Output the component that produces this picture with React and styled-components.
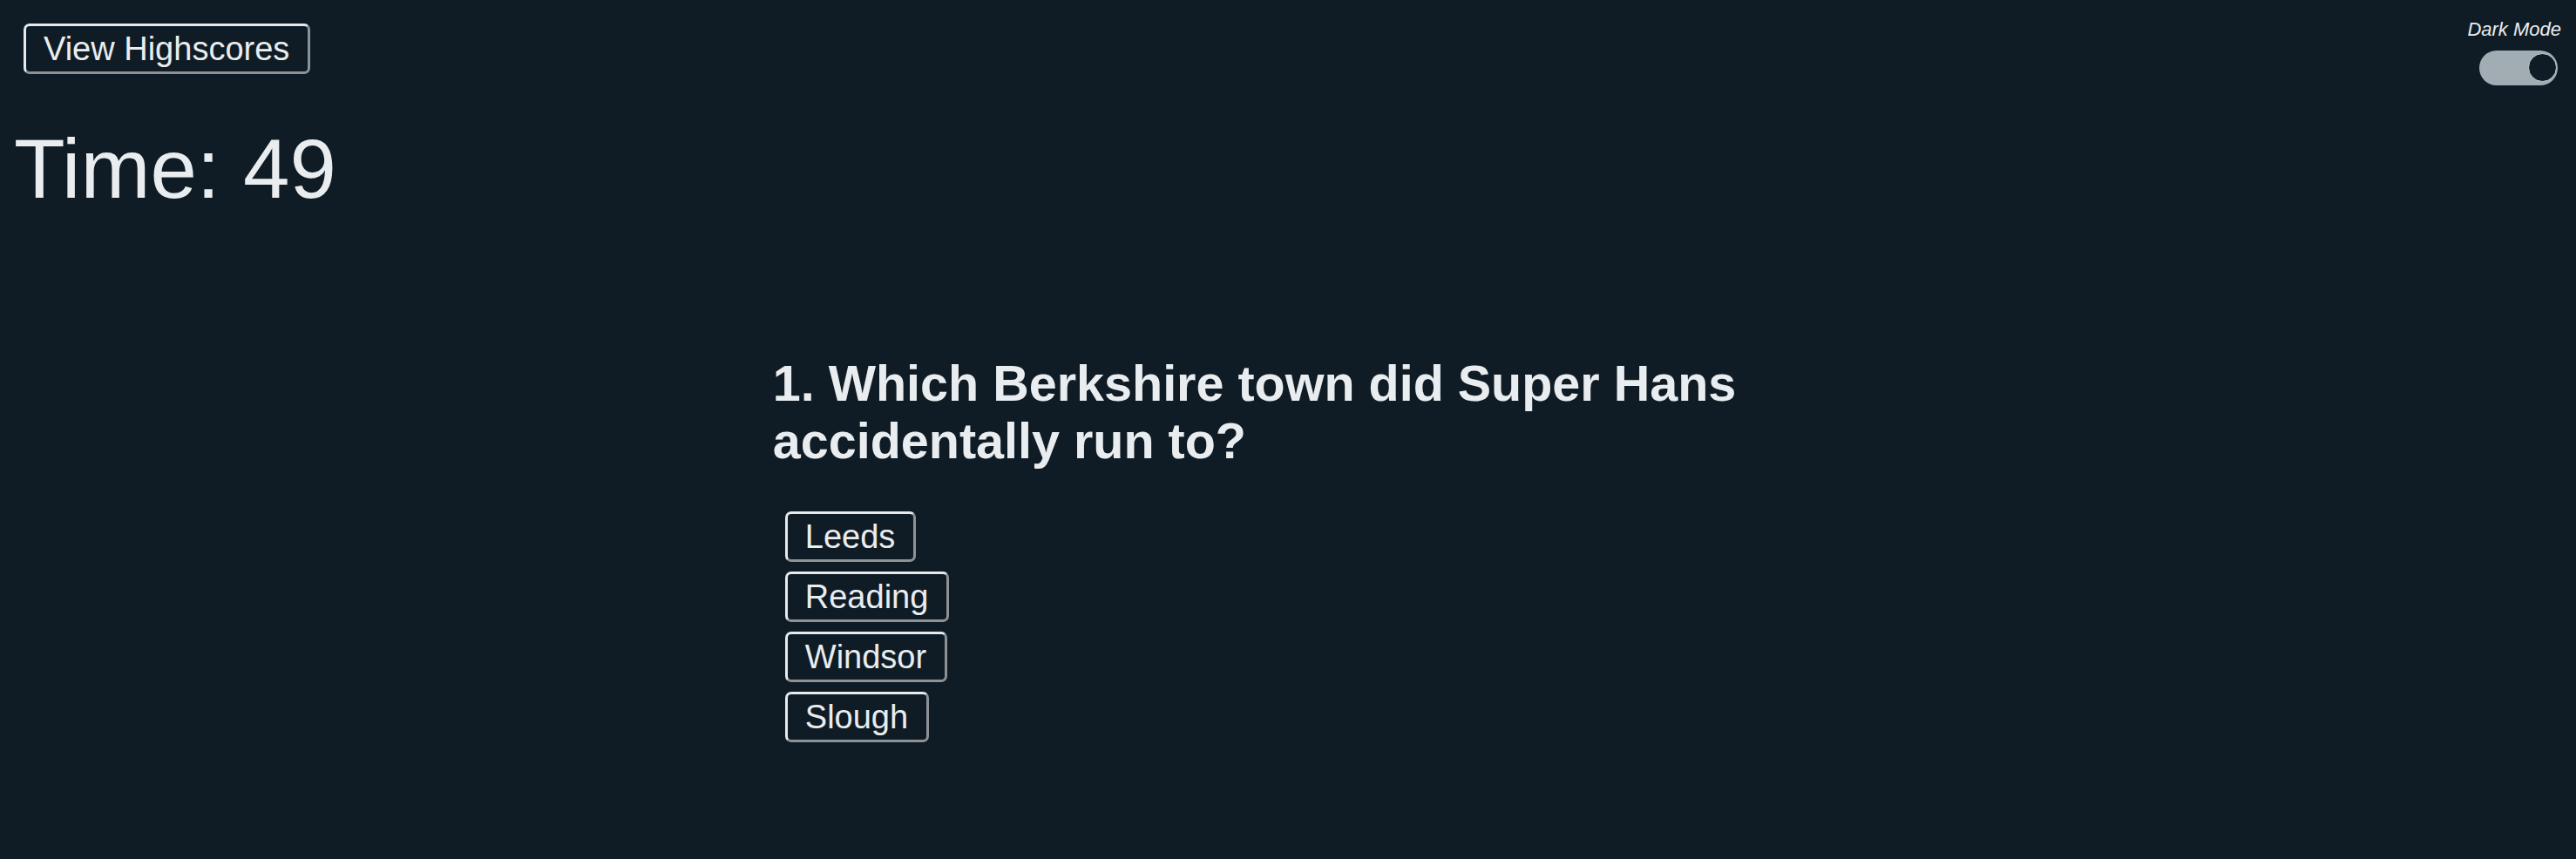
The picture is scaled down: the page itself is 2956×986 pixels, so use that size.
import React, { useState } from "react";
import styled, { createGlobalStyle } from "styled-components";

const GlobalStyle = createGlobalStyle`
  html, body {
    margin: 0;
    padding: 0;
    background: #101c25;
  }
  body {
    font-family: "Liberation Sans", Arial, sans-serif;
    color: #e9edef;
  }
`;

const Page = styled.div`
  min-height: 100vh;
  background: #101c25;
  color: #e9edef;
  font-family: "Liberation Sans", Arial, sans-serif;
`;

const TopBar = styled.header`
  display: flex;
  justify-content: space-between;
  align-items: flex-start;
  padding: 0 17px 0 27px;
`;

const OutlineButton = styled.button`
  display: block;
  font-family: "Liberation Sans", Arial, sans-serif;
  font-size: 38px;
  line-height: normal;
  color: #e9edef;
  background: transparent;
  padding: 4.5px 21px 4.5px 20px;
  border: 3px solid;
  border-color: #e6eaec #8f9294 #8f9294 #e6eaec;
  border-radius: 7px;
  cursor: pointer;
  white-space: nowrap;
`;

const HighscoresButton = styled(OutlineButton)`
  margin-top: 27px;
`;

const ThemeSwitch = styled.label`
  display: flex;
  flex-direction: column;
  align-items: flex-end;
  padding-top: 21px;
  cursor: pointer;
`;

const SwitchLabel = styled.span`
  font-size: 22px;
  font-style: italic;
  line-height: normal;
  color: #e9edef;
`;

const Track = styled.span`
  position: relative;
  display: block;
  width: 90px;
  height: 40px;
  margin-top: 11px;
  margin-right: 4px;
  border-radius: 20px;
  background: #a2adb3;
`;

const Knob = styled.span`
  position: absolute;
  top: 3px;
  ${(p) => (p.$on ? "right: 1px;" : "left: 1px;")}
  width: 31px;
  height: 31px;
  border-radius: 50%;
  background: #101c25;
  border: 1.5px solid #c9d0d4;
`;

const Timer = styled.h1`
  margin: 41px 0 0 16px;
  font-size: 96px;
  font-weight: 400;
  line-height: normal;
  color: #e9edef;
`;

const Quiz = styled.main`
  width: 40%;
  margin: 158px auto 0;
`;

const Question = styled.h2`
  margin: 0;
  font-size: 57.5px;
  font-weight: 700;
  line-height: normal;
  color: #e9edef;
`;

const Answers = styled.ol`
  list-style: none;
  margin: 48px 0 0;
  padding: 0 0 0 14px;
  display: flex;
  flex-direction: column;
  align-items: flex-start;
  gap: 11px;
`;

const answers = ["Leeds", "Reading", "Windsor", "Slough"];

export default function App() {
  const [dark, setDark] = useState(true);
  return (
    <Page>
      <GlobalStyle />
      <TopBar>
        <HighscoresButton>View Highscores</HighscoresButton>
        <ThemeSwitch onClick={() => setDark((d) => !d)}>
          <SwitchLabel>Dark Mode</SwitchLabel>
          <Track>
            <Knob $on={dark} />
          </Track>
        </ThemeSwitch>
      </TopBar>
      <Timer>Time: 49</Timer>
      <Quiz>
        <Question>1. Which Berkshire town did Super Hans accidentally run to?</Question>
        <Answers>
          {answers.map((a) => (
            <li key={a}>
              <OutlineButton>{a}</OutlineButton>
            </li>
          ))}
        </Answers>
      </Quiz>
    </Page>
  );
}
